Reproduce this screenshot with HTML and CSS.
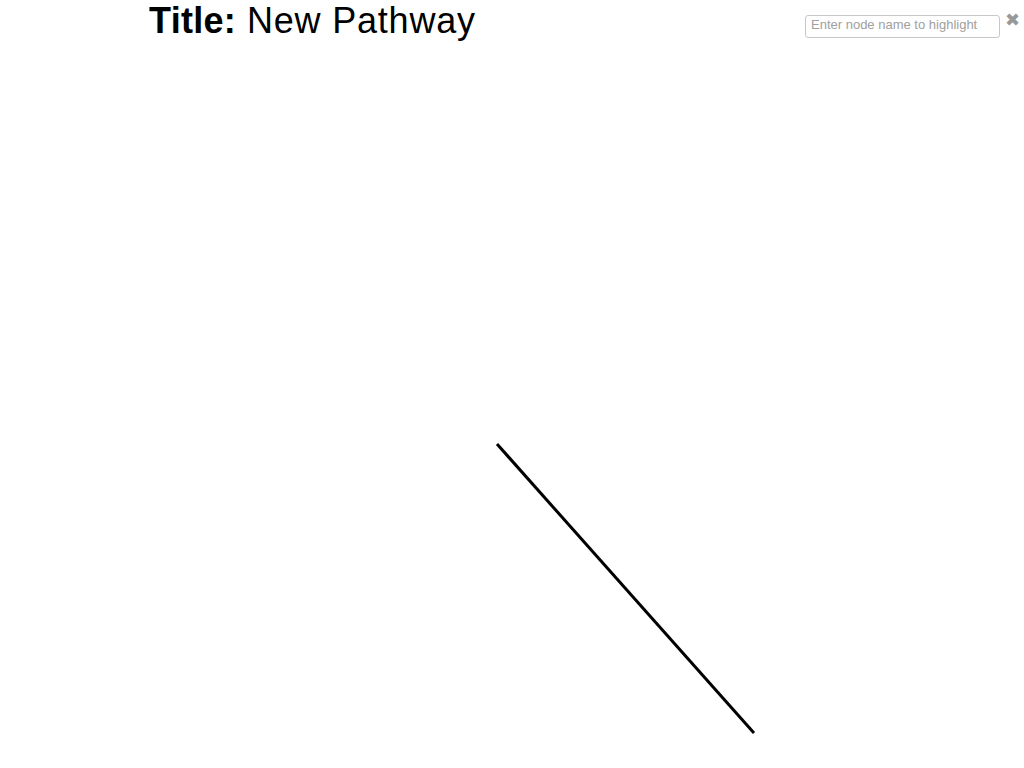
FILE: index.html
```html
<!DOCTYPE html>
<html>
<head>
<meta charset="utf-8">
<link rel="stylesheet" href="styles.css">
</head>
<body>
<div class="page">
  <header class="topbar">
    <h1 class="title"><span class="title-label">Title:</span> <span class="title-name">New Pathway</span></h1>
    <div class="search">
      <input class="search-input" type="text" placeholder="Enter node name to highlight">
      <span class="close">&#x2716;</span>
    </div>
  </header>
  <svg class="canvas" width="1024" height="768" viewBox="0 0 1024 768">
    <line x1="497" y1="444" x2="754" y2="733" stroke="#000" stroke-width="3"/>
  </svg>
</div>
</body>
</html>
```

FILE: styles.css
```css
html, body {
  margin: 0;
  padding: 0;
  background: #fff;
  font-family: "Liberation Sans", Arial, sans-serif;
}
.page {
  position: relative;
  width: 1024px;
  height: 768px;
  overflow: hidden;
}
.topbar {
  display: flex;
  justify-content: space-between;
  align-items: flex-start;
  padding-left: 149px;
  position: relative;
  z-index: 1;
}
.title {
  margin: 0;
  font-size: 36px;
  line-height: 42px;
  font-weight: normal;
  color: #000;
  letter-spacing: 0.8px;
  white-space: nowrap;
}
.title-label {
  font-weight: bold;
  letter-spacing: 0.3px;
}
.search {
  display: flex;
  align-items: flex-start;
  padding-top: 15px;
  padding-right: 4px;
}
.search-input {
  width: 195px;
  height: 23px;
  box-sizing: border-box;
  border: 1px solid #c8c8c8;
  border-radius: 3px;
  padding: 0 5px 5px 5px;
  font-family: "Liberation Sans", Arial, sans-serif;
  font-size: 13px;
  color: #333;
  outline: none;
}
.search-input::placeholder {
  color: #a0a0a0;
}
.close {
  margin-left: 5px;
  margin-top: -6px;
  font-size: 18px;
  color: #999;
  line-height: 22px;
}
.canvas {
  position: absolute;
  left: 0;
  top: 0;
}
```
